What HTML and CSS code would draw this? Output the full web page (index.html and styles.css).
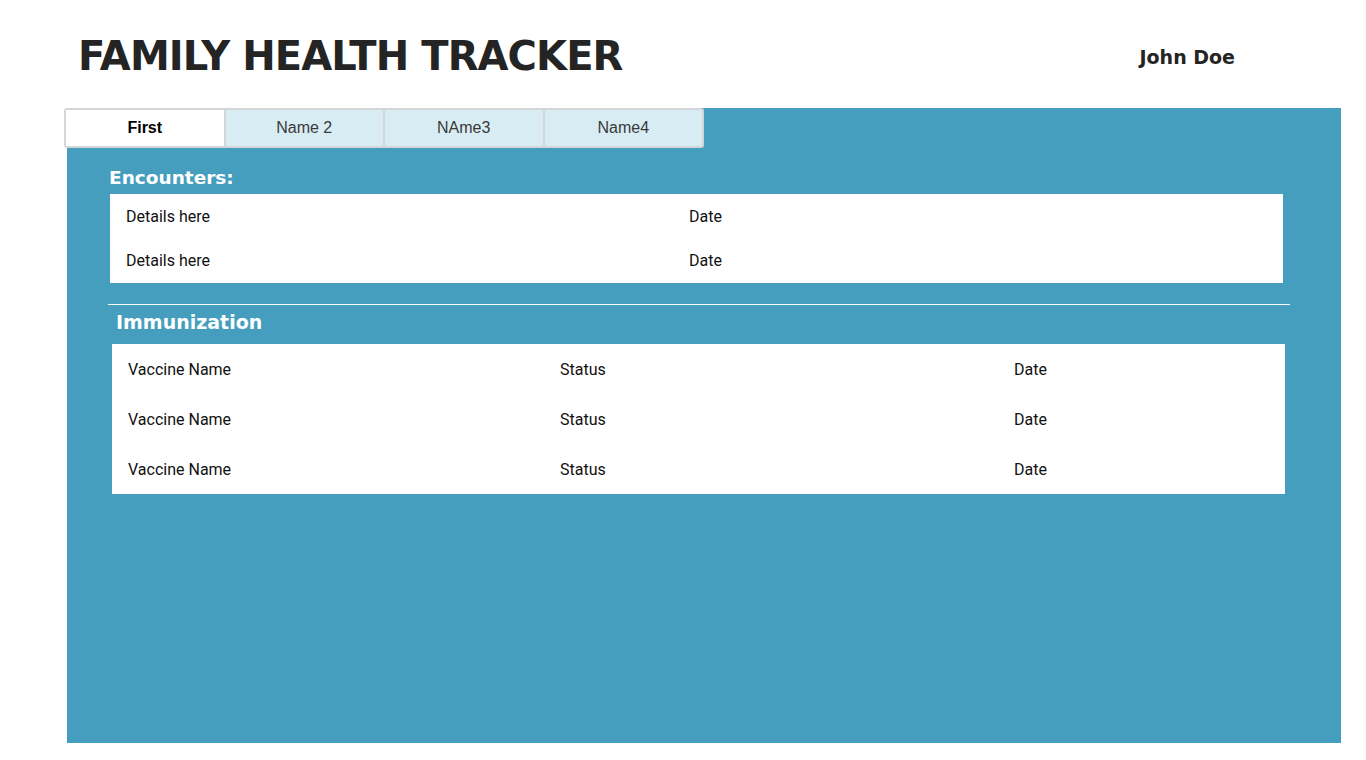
FILE: index.html
```html
<!DOCTYPE html>
<html>
<head>
<meta charset="utf-8">
<link rel="stylesheet" href="styles.css">
</head>
<body>
<header class="top">
  <h1 class="title">FAMILY HEALTH TRACKER</h1>
  <div class="user">John Doe</div>
</header>
<main class="panel">
  <nav class="tabs">
    <div class="tab active">First</div>
    <div class="tab">Name 2</div>
    <div class="tab">NAme3</div>
    <div class="tab">Name4</div>
  </nav>
  <section class="enc">
    <h2 class="sec-title">Encounters:</h2>
    <div class="table enc-table">
      <div class="row"><span>Details here</span><span>Date</span></div>
      <div class="row"><span>Details here</span><span>Date</span></div>
    </div>
  </section>
  <hr class="divider">
  <section class="imm">
    <h2 class="sec-title imm-title">Immunization</h2>
    <div class="table imm-table">
      <div class="row"><span>Vaccine Name</span><span>Status</span><span>Date</span></div>
      <div class="row"><span>Vaccine Name</span><span>Status</span><span>Date</span></div>
      <div class="row"><span>Vaccine Name</span><span>Status</span><span>Date</span></div>
    </div>
  </section>
</main>
</body>
</html>
```

FILE: styles.css
```css
html, body {
  margin: 0;
  padding: 0;
  background: #ffffff;
}
body {
  width: 1366px;
  height: 760px;
  overflow: hidden;
  font-family: "DejaVu Sans", sans-serif;
}
.top {
  display: flex;
  align-items: center;
  justify-content: space-between;
  height: 108px;
  padding: 6px 131px 0 78px;
  box-sizing: border-box;
}
.title {
  margin: 0;
  font-family: "DejaVu Sans", sans-serif;
  font-weight: bold;
  font-size: 40px;
  color: #242424;
  letter-spacing: -0.9px;
  padding-bottom: 2px;
}
.user {
  font-family: "DejaVu Sans", sans-serif;
  font-weight: bold;
  font-size: 19px;
  color: #242424;
  padding-bottom: 1px;
}
.panel {
  margin-left: 67px;
  width: 1274px;
  height: 635px;
  background: #459ebd;
  display: flex;
  flex-direction: column;
}
.tabs {
  display: flex;
  width: 640px;
  height: 40px;
  margin-left: -3px;
  box-sizing: border-box;
  border: 2px solid #d2d6d8;
  border-radius: 3px;
  background: #d2d6d8;
  gap: 2px;
}
.tab {
  flex: 1;
  display: flex;
  align-items: center;
  justify-content: center;
  background: #d8ecf3;
  font-family: "Liberation Sans", Arial, sans-serif;
  font-size: 16px;
  color: #3a3a3a;
}
.tab.active {
  background: #ffffff;
  color: #000000;
  font-weight: bold;
}
.sec-title {
  margin: 0;
  font-family: "DejaVu Sans", sans-serif;
  font-weight: bold;
  font-size: 18px;
  color: #ffffff;
  line-height: 22px;
}
.enc {
  padding: 19px 58px 0 42px;
}
.enc .sec-title {
  font-size: 18.5px;
  margin-bottom: 5px;
}
.table {
  background: #ffffff;
  font-family: Roboto, "Liberation Sans", sans-serif;
  font-size: 16px;
  color: #111111;
}
.enc-table {
  margin-left: 1px;
  padding-bottom: 1px;
}
.enc-table .row {
  display: grid;
  grid-template-columns: 563px 1fr;
  height: 44px;
  align-items: center;
  padding-left: 16px;
}
.divider {
  margin: 21px 51px 0 41px;
  border: 0;
  height: 1px;
  background: #ffffff;
}
.imm {
  padding: 6px 56px 0 45px;
}
.imm-title {
  font-size: 19px;
  padding-left: 4px;
  margin-bottom: 11px;
}
.imm-table .row {
  display: grid;
  grid-template-columns: 432px 454px 1fr;
  height: 50px;
  align-items: center;
  padding-left: 16px;
  padding-top: 1px;
  box-sizing: border-box;
}
```
